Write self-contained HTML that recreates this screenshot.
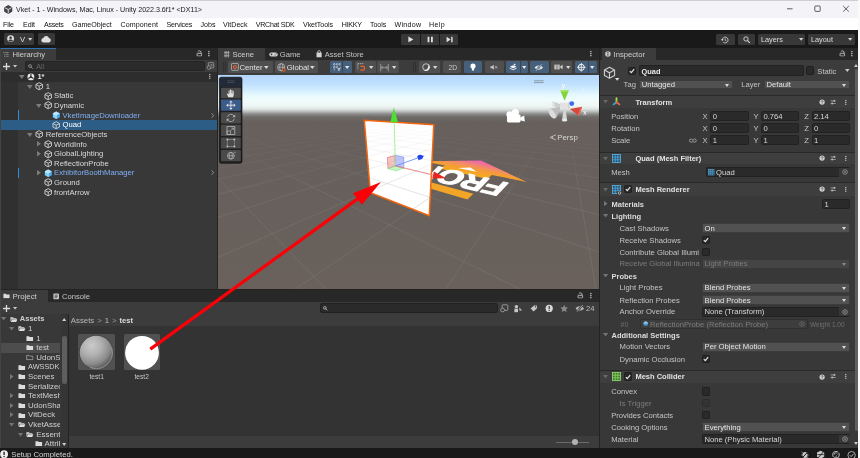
<!DOCTYPE html>
<html lang="en">
<head>
<meta charset="utf-8">
<title>Vket - 1 - Windows, Mac, Linux - Unity 2022.3.6f1* &lt;DX11&gt;</title>
<style>
*{box-sizing:border-box;margin:0;padding:0}
html,body{width:860px;height:458px;overflow:hidden;background:#232323}
body{will-change:transform}
body{font-family:"Liberation Sans",sans-serif;font-size:7.65px;color:#c4c4c4;position:relative;line-height:1}
div{position:absolute}
.t{white-space:nowrap;line-height:10px;height:10px}
b{font-weight:bold}
svg{position:absolute;overflow:visible}
.f{background:#2a2a2a;border:.6px solid #212121;border-radius:1.5px}
.dd{background:#515151;border:.6px solid #3c3c3c;border-radius:1.5px}
.dd:after{content:"";position:absolute;right:3px;top:3px;border:2.4px solid transparent;border-top:3px solid #d8d8d8;border-bottom:0}
.cb{width:8px;height:8.4px;background:#2a2a2a;border:.6px solid #1f1f1f;border-radius:1.5px}
.dd.dis:after{border-top-color:#8a8a8a}
.btn{background:#383838;border-radius:1.5px}
.tb{background:#4f4f4f;border-radius:1.5px}
.tb.on{background:#46607c}
</style>
</head>
<body>
<svg width="0" height="0" style="left:0;top:0"><defs>
<symbol id="cube" viewBox="0 0 10 10"><path d="M5 .8 8.9 2.9V7.2L5 9.3 1.1 7.2V2.9Z" fill="none" stroke="#d6d6d6" stroke-width="1.05" stroke-linejoin="round"/><path d="M1.2 3 5 5 8.8 3M5 5V9.2" fill="none" stroke="#d6d6d6" stroke-width="1.05"/></symbol>
<symbol id="pcube" viewBox="0 0 10 10"><path d="M5 .6 9 2.8V7.3L5 9.5 1 7.3V2.8Z" fill="#76cdf8"/><path d="M5 .6 9 2.8 5 5 1 2.8Z" fill="#b4e4fc"/><path d="M5 5 9 2.8V7.3L5 9.5Z" fill="#48a6ec"/><path d="M1.2 2.9 5 5 8.8 2.9M5 5V9.3" fill="none" stroke="#e8f6ff" stroke-width=".7"/></symbol>
<symbol id="ulogo" viewBox="0 0 10 10"><circle cx="5" cy="5" r="4.4" fill="#e8e8e8"/><path d="M5 5V1M5 5 1.6 7M5 5 8.4 7" stroke="#2c2c2c" stroke-width="1.5"/><circle cx="5" cy="5" r="1.1" fill="#2c2c2c"/></symbol>
<symbol id="fold" viewBox="0 0 10 8"><path d="M.6 1.2H4L4.8 2.2H9.4V7.4H.6Z" fill="#dcdcdc"/></symbol>
<symbol id="foldo" viewBox="0 0 10 8"><path d="M.6 1.2H4L4.8 2.2H8.4V3.2H2.4L.6 7.2Z" fill="#dcdcdc"/><path d="M2.8 3.8H9.8L8.2 7.4H1Z" fill="#dcdcdc"/></symbol>
<symbol id="folde" viewBox="0 0 10 8"><path d="M.9 1.5H3.9L4.7 2.5H9.1V7.1H.9Z" fill="none" stroke="#c8c8c8" stroke-width=".8"/></symbol>
<symbol id="help" viewBox="0 0 8 8"><circle cx="4" cy="4" r="3.4" fill="#d0d0d0"/><path d="M2.9 3.2C2.9 1.8 5.2 1.8 5.2 3.2 5.2 4 4 4 4 4.9" stroke="#3a3a3a" stroke-width=".9" fill="none"/><circle cx="4" cy="6" r=".55" fill="#3a3a3a"/></symbol>
<symbol id="preset" viewBox="0 0 8 8"><path d="M.8 2.4H7.2M.8 5.6H7.2" stroke="#c8c8c8" stroke-width=".8"/><rect x="4.6" y="1.2" width="1.4" height="2.4" fill="#c8c8c8"/><rect x="2" y="4.4" width="1.4" height="2.4" fill="#c8c8c8"/></symbol>
<symbol id="kebab" viewBox="0 0 2 8"><rect x=".25" y="1" width="1.5" height="1.5" fill="#c8c8c8"/><rect x=".25" y="3.25" width="1.5" height="1.5" fill="#c8c8c8"/><rect x=".25" y="5.5" width="1.5" height="1.5" fill="#c8c8c8"/></symbol>
<symbol id="lock" viewBox="0 0 8 8"><path d="M6.1 4V2.6C5.9 .7 3 .5 2.2 2" fill="none" stroke="#c8c8c8" stroke-width="1.05"/><rect x="1.3" y="4" width="5.5" height="3.3" rx=".5" fill="none" stroke="#c8c8c8" stroke-width="1.05"/></symbol>
<symbol id="pick" viewBox="0 0 8 8"><circle cx="4" cy="4" r="3.1" fill="none" stroke="#c4c4c4" stroke-width=".75"/><circle cx="4" cy="4" r=".95" fill="#c4c4c4"/></symbol>
<symbol id="meshg" viewBox="0 0 9 9"><rect x=".5" y=".5" width="8" height="8" fill="#25506c" stroke="#5cb6e8" stroke-width=".8"/><path d="M3.2 .5V8.5M5.8 .5V8.5M.5 3.2H8.5M.5 5.8H8.5" stroke="#5cb6e8" stroke-width=".7"/></symbol>
<symbol id="meshc" viewBox="0 0 9 9"><rect x=".5" y=".5" width="8" height="8" fill="#3f7a2c" stroke="#9be070" stroke-width=".8"/><path d="M3.2 .5V8.5M5.8 .5V8.5M.5 3.2H8.5M.5 5.8H8.5" stroke="#9be070" stroke-width=".7"/></symbol>
</defs></svg>
<!-- title bar -->
<div class="" style="left:0px;top:0px;width:860px;height:18px;background:#f3f3f8;"></div>
<div class="" style="left:0px;top:0px;width:860px;height:0.8px;background:#cfcfcf;"></div>
<svg style="left:4px;top:5px" width="8.5" height="9" viewBox="0 0 10 10" ><path d="M5 .4 9.2 2.7V7.3L5 9.6 .8 7.3V2.7Z" fill="#4a4a4a" stroke="#1e1e1e" stroke-width=".9"/><path d="M5 5V9.3M5 5 1.1 2.9M5 5 8.9 2.9" stroke="#f0f0f0" stroke-width="1" fill="none"/></svg>
<div class="t " style="left:16px;top:5px;font-size:7.1px;color:#1a1a1a;">Vket - 1 - Windows, Mac, Linux - Unity 2022.3.6f1* &lt;DX11&gt;</div>
<svg style="left:787.2px;top:4.9px" width="64" height="8" viewBox="0 0 64 8" ><path d="M0 3.8H5.6" stroke="#222" stroke-width=".7"/><rect x="27.8" y="1" width="5.4" height="5.4" fill="none" stroke="#222" stroke-width=".7" rx=".9"/><path d="M56.2 1 61.8 6.6M61.8 1 56.2 6.6" stroke="#222" stroke-width=".7"/></svg>
<!-- menu bar -->
<div class="" style="left:0px;top:18px;width:860px;height:12px;background:#fff;"></div>
<div class="t " style="left:3px;top:20px;font-size:7.1px;color:#111;letter-spacing:-0.15px">File</div>
<div class="t " style="left:23px;top:20px;font-size:7.1px;color:#111;letter-spacing:-0.05px">Edit</div>
<div class="t " style="left:44px;top:20px;font-size:7.1px;color:#111;letter-spacing:-0.3px">Assets</div>
<div class="t " style="left:72px;top:20px;font-size:7.1px;color:#111;">GameObject</div>
<div class="t " style="left:120.5px;top:20px;font-size:7.1px;color:#111;letter-spacing:0.09px">Component</div>
<div class="t " style="left:166.5px;top:20px;font-size:7.1px;color:#111;letter-spacing:-0.21px">Services</div>
<div class="t " style="left:200.5px;top:20px;font-size:7.1px;color:#111;">Jobs</div>
<div class="t " style="left:223px;top:20px;font-size:7.1px;color:#111;letter-spacing:0.03px">VitDeck</div>
<div class="t " style="left:255.8px;top:20px;font-size:7.1px;color:#111;letter-spacing:-0.27px">VRChat SDK</div>
<div class="t " style="left:303px;top:20px;font-size:7.1px;color:#111;letter-spacing:-0.09px">VketTools</div>
<div class="t " style="left:341.8px;top:20px;font-size:7.1px;color:#111;letter-spacing:-0.26px">HIKKY</div>
<div class="t " style="left:370px;top:20px;font-size:7.1px;color:#111;letter-spacing:-0.06px">Tools</div>
<div class="t " style="left:394.5px;top:20px;font-size:7.1px;color:#111;letter-spacing:0.27px">Window</div>
<div class="t " style="left:429px;top:20px;font-size:7.1px;color:#111;letter-spacing:0.35px">Help</div>
<!-- main toolbar -->
<div class="" style="left:0px;top:30px;width:860px;height:18px;background:#191919;"></div>
<div class="btn" style="left:4px;top:33.4px;width:30.4px;height:11.2px;"></div><div class="btn" style="left:37.5px;top:33.4px;width:17.5px;height:11.2px;"></div>
<svg style="left:7.1px;top:35.4px" width="7.2" height="7.2" viewBox="0 0 10 10" ><circle cx="5" cy="5" r="4.8" fill="#dedede"/><circle cx="5" cy="3.9" r="1.8" fill="#383838"/><path d="M1.9 8C2.4 5.6 7.6 5.6 8.1 8 6.6 9.6 3.4 9.6 1.9 8Z" fill="#383838"/></svg>
<div class="t " style="left:20px;top:35px;font-size:7.6px;color:#e0e0e0;">V</div>
<svg style="left:28px;top:38.2px" width="4.4" height="2.8" viewBox="0 0 4.4 2.8" ><path d="M0 0H4.4L2.2 2.8Z" fill="#d0d0d0"/></svg>
<svg style="left:41px;top:36px" width="10.6" height="6.8" viewBox="0 0 16 10" ><path d="M4 9.6A3.3 3.3 0 0 1 3.6 3 4.4 4.4 0 0 1 12 2.8 3.5 3.5 0 0 1 12.4 9.6Z" fill="#e0e0e0"/></svg>
<div class="btn" style="left:401px;top:33.8px;width:18.6px;height:10.8px;border-radius:1.5px 0 0 1.5px"></div><div class="btn" style="left:420.6px;top:33.8px;width:18.6px;height:10.8px;border-radius:0"></div><div class="btn" style="left:440.2px;top:33.8px;width:18px;height:10.8px;border-radius:0 1.5px 1.5px 0"></div>
<svg style="left:401px;top:33.8px" width="58" height="11" viewBox="0 0 58 11" ><path d="M7.4 2.6 12.4 5.4 7.4 8.2Z" fill="#e4e4e4"/><path d="M26.6 2.8H28.4V8.2H26.6ZM30 2.8H31.8V8.2H30Z" fill="#e4e4e4"/><path d="M45.6 2.8 49.6 5.4 45.6 8.2ZM50.2 2.8H51.6V8.2H50.2Z" fill="#e4e4e4"/></svg>
<div class="btn" style="left:716px;top:33.6px;width:18.5px;height:11.2px;"></div><div class="btn" style="left:737.6px;top:33.6px;width:17.6px;height:11.2px;"></div><div class="btn" style="left:758.4px;top:33.6px;width:46.8px;height:11.2px;"></div><div class="btn" style="left:807.6px;top:33.6px;width:47.4px;height:11.2px;"></div>
<svg style="left:721px;top:35.5px" width="8" height="8" viewBox="0 0 10 10" ><path d="M1.6 5A3.6 3.6 0 1 1 2.8 7.7" fill="none" stroke="#dcdcdc" stroke-width="1"/><path d="M0 4.2 1.7 6.3 3.3 4.2Z" fill="#dcdcdc"/><path d="M5.2 3V5.3L6.8 6.2" fill="none" stroke="#dcdcdc" stroke-width=".9"/></svg>
<svg style="left:742.8px;top:35.8px" width="7.4" height="7.4" viewBox="0 0 10 10" ><circle cx="4" cy="4" r="2.9" fill="none" stroke="#dcdcdc" stroke-width="1.2"/><path d="M6.2 6.2 9.2 9.2" stroke="#dcdcdc" stroke-width="1.4"/></svg>
<div class="t " style="left:761px;top:35px;font-size:7.3px;color:#dedede;">Layers</div><div class="t " style="left:811px;top:35px;font-size:7.3px;color:#dedede;">Layout</div>
<svg style="left:798.8px;top:38.2px" width="4.4" height="2.8" viewBox="0 0 4.4 2.8" ><path d="M0 0H4.4L2.2 2.8Z" fill="#d0d0d0"/></svg><svg style="left:847.8px;top:38.2px" width="4.4" height="2.8" viewBox="0 0 4.4 2.8" ><path d="M0 0H4.4L2.2 2.8Z" fill="#d0d0d0"/></svg>
<!-- hierarchy -->
<div class="" style="left:0px;top:47.9px;width:217px;height:12.1px;background:#282828;"></div>
<div class="" style="left:0px;top:47.9px;width:56px;height:12.1px;background:#3c3c3c;border-top:1.7px solid #2f72b6"></div>
<svg style="left:3.4px;top:52.2px" width="5.8" height="4.8" viewBox="0 0 8 7" ><path d="M0 .8H2M3 .8H8M1.4 3.5H3.4M4.4 3.5H8M1.4 6.2H3.4M4.4 6.2H8" stroke="#9c9c9c" stroke-width="1.1"/></svg>
<div class="t " style="left:12.5px;top:50px;color:#cfcfcf;">Hierarchy</div>
<svg style="left:195.5px;top:50.1px" width="6.6" height="6.6"><use href="#lock"/></svg><svg style="left:208px;top:49.7px" width="1.8" height="7.2"><use href="#kebab"/></svg>
<div class="" style="left:0px;top:60px;width:217px;height:12px;background:#3c3c3c;"></div>
<svg style="left:3px;top:62.5px" width="7" height="7" viewBox="0 0 7 7" ><path d="M3.5 0V7M0 3.5H7" stroke="#dcdcdc" stroke-width="1.3"/></svg><svg style="left:12.9px;top:65px" width="4.2" height="2.6" viewBox="0 0 4.2 2.6" ><path d="M0 0H4.2L2.1 2.6Z" fill="#c8c8c8"/></svg>
<div class="f" style="left:25px;top:61.1px;width:179.6px;height:9.6px;border-radius:2px;background:#2b2b2b;border-color:#242424"></div>
<svg style="left:28.3px;top:63.5px" width="5" height="5" viewBox="0 0 10 10" ><circle cx="4" cy="4" r="2.8" fill="none" stroke="#a8a8a8" stroke-width="1.4"/><path d="M6 6 9.4 9.4" stroke="#a8a8a8" stroke-width="1.5"/></svg>
<div class="t " style="left:36.3px;top:62px;font-size:7.2px;color:#666;">All</div>
<svg style="left:206px;top:61.9px" width="8.4" height="8.4" viewBox="0 0 10 10" ><rect x="2.8" y=".8" width="6.4" height="6.4" rx=".8" fill="none" stroke="#a8a8a8" stroke-width=".9"/><circle cx="3.4" cy="6.6" r="2.1" fill="#3c3c3c" stroke="#a8a8a8" stroke-width=".9"/><path d="M5.2 3.2H7.2V5.2" fill="none" stroke="#a8a8a8" stroke-width=".9"/></svg>
<div class="" style="left:0px;top:72px;width:217px;height:217px;background:#383838;"></div>
<div class="" style="left:0px;top:72px;width:18.3px;height:217px;background:#303030;"></div>
<div class="" style="left:0px;top:72px;width:217px;height:9.5px;background:#2d2d2d;"></div>
<svg style="left:19px;top:74.95px" width="5.6" height="3.9" viewBox="0 0 5.6 3.9" ><path d="M0 0H5.6L2.8 3.9Z" fill="#7c7c7c"/></svg>
<svg style="left:27px;top:72.8px" width="7.8" height="7.8"><use href="#ulogo"/></svg>
<div class="t " style="left:37.4px;top:72px;font-size:7.5px;color:#e4e4e4;font-weight:bold;">1*</div>
<svg style="left:208.6px;top:73.3px" width="1.7" height="6.8"><use href="#kebab"/></svg>
<svg style="left:27.4px;top:84.58px" width="5.6" height="3.9" viewBox="0 0 5.6 3.9" ><path d="M0 0H5.6L2.8 3.9Z" fill="#7c7c7c"/></svg>
<svg style="left:35.2px;top:82.13px" width="8.4" height="8.4"><use href="#cube"/></svg>
<div class="t " style="left:45.75px;top:82px;font-size:7.7px;color:#dadada;">1</div>
<svg style="left:43.6px;top:91.76px" width="8.4" height="8.4"><use href="#cube"/></svg>
<div class="t " style="left:54.1px;top:91px;font-size:7.7px;color:#dadada;">Static</div>
<svg style="left:35.8px;top:103.84px" width="5.6" height="3.9" viewBox="0 0 5.6 3.9" ><path d="M0 0H5.6L2.8 3.9Z" fill="#7c7c7c"/></svg>
<svg style="left:43.6px;top:101.39px" width="8.4" height="8.4"><use href="#cube"/></svg>
<div class="t " style="left:54.1px;top:101px;font-size:7.7px;color:#dadada;">Dynamic</div>
<svg style="left:52px;top:111.02px" width="8.4" height="8.4"><use href="#pcube"/></svg>
<div class="t " style="left:62.45px;top:111px;font-size:7.7px;color:#7fb0f5;">VketImageDownloader</div>
<div class="" style="left:18.3px;top:110.42px;width:0.9px;height:9.6px;background:#2b8fe0;"></div>
<svg style="left:210.5px;top:112.62px" width="3.4" height="5.2" viewBox="0 0 3.4 5.2" ><path d="M.5 .4 2.8 2.6 .5 4.8" fill="none" stroke="#a0a0a0" stroke-width=".8"/></svg>
<div class="" style="left:0px;top:120.05px;width:217px;height:9.63px;background:#2c5d87;"></div>
<svg style="left:52px;top:120.65px" width="8.4" height="8.4"><use href="#cube"/></svg>
<div class="t " style="left:62.45px;top:120px;font-size:7.7px;color:#fff;">Quad</div>
<svg style="left:27.4px;top:132.73px" width="5.6" height="3.9" viewBox="0 0 5.6 3.9" ><path d="M0 0H5.6L2.8 3.9Z" fill="#7c7c7c"/></svg>
<svg style="left:35.2px;top:130.28px" width="8.4" height="8.4"><use href="#cube"/></svg>
<div class="t " style="left:45.75px;top:130px;font-size:7.7px;color:#dadada;">ReferenceObjects</div>
<svg style="left:36.65px;top:141.31px" width="3.9" height="5.6" viewBox="0 0 3.9 5.6" ><path d="M0 0V5.6L3.9 2.8Z" fill="#7c7c7c"/></svg>
<svg style="left:43.6px;top:139.91px" width="8.4" height="8.4"><use href="#cube"/></svg>
<div class="t " style="left:54.1px;top:140px;font-size:7.7px;color:#dadada;">WorldInfo</div>
<svg style="left:36.65px;top:150.94px" width="3.9" height="5.6" viewBox="0 0 3.9 5.6" ><path d="M0 0V5.6L3.9 2.8Z" fill="#7c7c7c"/></svg>
<svg style="left:43.6px;top:149.54px" width="8.4" height="8.4"><use href="#cube"/></svg>
<div class="t " style="left:54.1px;top:149px;font-size:7.7px;color:#dadada;">GlobalLighting</div>
<svg style="left:43.6px;top:159.17px" width="8.4" height="8.4"><use href="#cube"/></svg>
<div class="t " style="left:54.1px;top:159px;font-size:7.7px;color:#dadada;">ReflectionProbe</div>
<svg style="left:36.65px;top:170.2px" width="3.9" height="5.6" viewBox="0 0 3.9 5.6" ><path d="M0 0V5.6L3.9 2.8Z" fill="#7c7c7c"/></svg>
<svg style="left:43.6px;top:168.8px" width="8.4" height="8.4"><use href="#pcube"/></svg>
<div class="t " style="left:54.1px;top:168px;font-size:7.7px;color:#7fb0f5;">ExhibitorBoothManager</div>
<div class="" style="left:18.3px;top:168.2px;width:0.9px;height:9.6px;background:#2b8fe0;"></div>
<svg style="left:210.5px;top:170.4px" width="3.4" height="5.2" viewBox="0 0 3.4 5.2" ><path d="M.5 .4 2.8 2.6 .5 4.8" fill="none" stroke="#a0a0a0" stroke-width=".8"/></svg>
<svg style="left:43.6px;top:178.43px" width="8.4" height="8.4"><use href="#cube"/></svg>
<div class="t " style="left:54.1px;top:178px;font-size:7.7px;color:#dadada;">Ground</div>
<svg style="left:43.6px;top:188.06px" width="8.4" height="8.4"><use href="#cube"/></svg>
<div class="t " style="left:54.1px;top:188px;font-size:7.7px;color:#dadada;">frontArrow</div>
<!-- scene panel -->
<div class="" style="left:218.4px;top:47.9px;width:380.4px;height:12.1px;background:#282828;"></div>
<div class="" style="left:218.4px;top:47.9px;width:46.2px;height:12.1px;background:#3c3c3c;"></div>
<svg style="left:223.6px;top:50.9px" width="5.6" height="6.4" viewBox="0 0 7 8" ><path d="M1.4 0V8M3.5 0V8M5.6 0V8M0 2H7M0 6H7" stroke="#b8b8b8" stroke-width=".9"/></svg>
<div class="t " style="left:232.4px;top:50px;color:#cfcfcf;">Scene</div>
<svg style="left:269px;top:51.7px" width="9" height="4.8" viewBox="0 0 18 9" ><rect x=".5" y=".5" width="17" height="8" rx="4" fill="#d4d4d4"/><path d="M3 4.5H7M5 2.5V6.5" stroke="#282828" stroke-width="1.3"/><circle cx="12" cy="5.5" r="1" fill="#282828"/><circle cx="14.4" cy="3.4" r="1" fill="#282828"/></svg>
<div class="t " style="left:279.7px;top:50px;color:#c4c4c4;">Game</div>
<svg style="left:316px;top:50.1px" width="6.2" height="7.6" viewBox="0 0 8 10" ><path d="M.6 3.4H7.4V9.6H.6Z" fill="#d4d4d4"/><path d="M2.2 4.4V2.4C2.2 .2 5.8 .2 5.8 2.4V4.4" fill="none" stroke="#d4d4d4" stroke-width="1"/></svg>
<div class="t " style="left:324.8px;top:50px;font-size:7.5px;color:#c4c4c4;">Asset Store</div>
<svg style="left:589.7px;top:49.7px" width="1.8" height="7.2"><use href="#kebab"/></svg>
<div class="" style="left:218.4px;top:60px;width:380.4px;height:15px;background:#3c3c3c;"></div>
<svg style="left:222.6px;top:62.4px" width="3" height="9.6" viewBox="0 0 3 9.6" ><path d="M.5 0V9.6M2.5 0V9.6" stroke="#2c2c2c" stroke-width=".7"/></svg><svg style="left:413.2px;top:62.4px" width="3" height="9.6" viewBox="0 0 3 9.6" ><path d="M.5 0V9.6M2.5 0V9.6" stroke="#2c2c2c" stroke-width=".7"/></svg>
<div class="tb" style="left:228.1px;top:61.4px;width:45.2px;height:11.6px;"></div><svg style="left:230.7px;top:63.3px" width="7.8" height="7.8" viewBox="0 0 10 10" ><rect x=".6" y=".6" width="8.8" height="8.8" rx="1" fill="none" stroke="#c8c8c8" stroke-width=".9"/><circle cx="5" cy="5" r="1.9" fill="none" stroke="#f0602a" stroke-width="1.3"/></svg><div class="t " style="left:239.4px;top:63px;font-size:7.75px;color:#e0e0e0;">Center</div><svg style="left:264.4px;top:65.9px" width="4.6" height="3" viewBox="0 0 4.6 3" ><path d="M0 0H4.6L2.3 3Z" fill="#d8d8d8"/></svg>
<div class="tb" style="left:275px;top:61.4px;width:43px;height:11.6px;"></div><svg style="left:277.2px;top:63px" width="9.4" height="9.4" viewBox="0 0 12 12" ><circle cx="5.4" cy="5.4" r="4.6" fill="none" stroke="#c8c8c8" stroke-width=".9"/><ellipse cx="5.4" cy="5.4" rx="2" ry="4.6" fill="none" stroke="#c8c8c8" stroke-width=".8"/><path d="M.8 5.4H10" stroke="#c8c8c8" stroke-width=".8"/><circle cx="8.6" cy="8.8" r="1.9" fill="#4f4f4f" stroke="#f0602a" stroke-width="1.2"/></svg><div class="t " style="left:286.7px;top:63px;font-size:7.75px;color:#e0e0e0;">Global</div><svg style="left:310.3px;top:65.9px" width="4.6" height="3" viewBox="0 0 4.6 3" ><path d="M0 0H4.6L2.3 3Z" fill="#d8d8d8"/></svg>
<div class="tb on" style="left:330.1px;top:61.4px;width:21.6px;height:11.6px;"></div><svg style="left:332.7px;top:63.2px" width="8" height="8" viewBox="0 0 10 10" ><path d="M0 1.6H9.6M0 5.2H5.2M1.6 0V9.6M5.2 0V5M8.6 0V3.6" fill="none" stroke="#f0f0f0" stroke-width="1" stroke-dasharray="1.1 .9"/><path d="M5.4 5.6 7.4 8 9.6 5.6M7.4 8V10" fill="none" stroke="#fff" stroke-width="1.1"/></svg><div class="" style="left:342.4px;top:61.4px;width:0.6px;height:11.6px;background:#33465c;"></div><svg style="left:344.9px;top:65.95px" width="4.4" height="2.9" viewBox="0 0 4.4 2.9" ><path d="M0 0H4.4L2.2 2.9Z" fill="#e8e8e8"/></svg>
<div class="tb" style="left:354.5px;top:61.4px;width:21px;height:11.6px;"></div><svg style="left:356.9px;top:63.2px" width="8.4" height="8" viewBox="0 0 10 10" ><path d="M.8 .8H8.4M.8 .8V8.4" fill="none" stroke="#d0d0d0" stroke-width="1" stroke-dasharray="1.4 1"/><path d="M4 4.2H7A2.3 2.3 0 0 1 7 8.8H4" fill="none" stroke="#f0602a" stroke-width="1.5"/></svg><svg style="left:368.9px;top:65.95px" width="4.4" height="2.9" viewBox="0 0 4.4 2.9" ><path d="M0 0H4.4L2.2 2.9Z" fill="#d8d8d8"/></svg>
<div class="tb" style="left:377.3px;top:61.4px;width:21.9px;height:11.6px;"></div><svg style="left:379.7px;top:63.6px" width="9" height="7.2" viewBox="0 0 10 8" ><path d="M.7 0V8M9.3 0V8" fill="none" stroke="#8e8e8e" stroke-width="1.2"/><path d="M1.6 1.6 4.6 4 1.6 6.4ZM8.4 1.6 5.4 4 8.4 6.4Z" fill="#8e8e8e"/><path d="M1.4 4H8.6" stroke="#8e8e8e" stroke-width="1"/></svg><svg style="left:392.3px;top:65.95px" width="4.4" height="2.9" viewBox="0 0 4.4 2.9" ><path d="M0 0H4.4L2.2 2.9Z" fill="#d8d8d8"/></svg>
<div class="tb" style="left:418.8px;top:61.4px;width:21.7px;height:11.6px;"></div><svg style="left:421.6px;top:63.1px" width="8.2" height="8.2" viewBox="0 0 10 10" ><circle cx="5" cy="5" r="4.1" fill="none" stroke="#d8d8d8" stroke-width="1"/><path d="M7.6 1.6A4.3 4.3 0 0 1 2 8.4 5 5 0 0 0 7.6 1.6Z" fill="#f0f0f0"/></svg><svg style="left:433px;top:65.95px" width="4.4" height="2.9" viewBox="0 0 4.4 2.9" ><path d="M0 0H4.4L2.2 2.9Z" fill="#d8d8d8"/></svg>
<div class="tb" style="left:442.5px;top:61.4px;width:18.8px;height:11.6px;"></div><div class="t " style="left:448.6px;top:63px;font-size:6.7px;color:#c8c8c8;">2D</div>
<div class="tb on" style="left:463.8px;top:61.4px;width:18.7px;height:11.6px;"></div><svg style="left:470.2px;top:62.8px" width="6" height="8.8" viewBox="0 0 7 10" ><circle cx="3.5" cy="3.4" r="3" fill="#fff"/><path d="M2.2 5.6H4.8V8.6H2.2Z" fill="#fff"/></svg>
<div class="tb" style="left:485px;top:61.4px;width:18.8px;height:11.6px;"></div><svg style="left:490.4px;top:64px" width="8" height="6.6" viewBox="0 0 10 8" ><path d="M.6 2.8H2.4L4.8 .8V7.2L2.4 5.2H.6Z" fill="#c4c4c4"/><path d="M6.2 2.4 9 5.6M9 2.4 6.2 5.6" stroke="#c4c4c4" stroke-width=".9"/></svg>
<div class="tb on" style="left:505.8px;top:61.4px;width:22.2px;height:11.6px;"></div><svg style="left:508.6px;top:63.4px" width="8.4" height="7.6" viewBox="0 0 10 9" ><path d="M1 4.4 5 2.6 9 4.4 5 6.2Z" fill="#fff"/><path d="M1 6.2 5 8 9 6.2" fill="none" stroke="#fff" stroke-width="1"/><path d="M6.8 .4 7.3 1.5 8.4 2 7.3 2.5 6.8 3.6 6.3 2.5 5.2 2 6.3 1.5Z" fill="#fff"/></svg><div class="" style="left:519.5px;top:61.4px;width:0.6px;height:11.6px;background:#33465c;"></div><svg style="left:521.6px;top:65.95px" width="4.4" height="2.9" viewBox="0 0 4.4 2.9" ><path d="M0 0H4.4L2.2 2.9Z" fill="#e8e8e8"/></svg>
<div class="tb on" style="left:529.5px;top:61.4px;width:19.3px;height:11.6px;"></div><svg style="left:534.3px;top:63.6px" width="9.6" height="7.2" viewBox="0 0 12 9" ><path d="M.8 4.5C3 .9 9 .9 11.2 4.5 9 8.1 3 8.1 .8 4.5Z" fill="#e8e8e8"/><circle cx="6" cy="4.5" r="1.6" fill="#46607c"/><path d="M2.2 8.6 9.8 .4" stroke="#46607c" stroke-width="2"/><path d="M2.6 8.4 9.6 .6" stroke="#e8e8e8" stroke-width=".9"/></svg>
<div class="tb" style="left:550.8px;top:61.4px;width:21.7px;height:11.6px;"></div><svg style="left:553.8px;top:64.2px" width="9" height="6" viewBox="0 0 12 8" ><path d="M.5 .8H7.5V7.2H.5Z" fill="#d0d0d0"/><path d="M8.4 3 11.5 1V7L8.4 5Z" fill="#d0d0d0"/><path d="M3 .8V7.2M5 .8V7.2" stroke="#4f4f4f" stroke-width=".7"/></svg><svg style="left:565.6px;top:65.95px" width="4.4" height="2.9" viewBox="0 0 4.4 2.9" ><path d="M0 0H4.4L2.2 2.9Z" fill="#d8d8d8"/></svg>
<div class="tb on" style="left:574.5px;top:61.4px;width:22.3px;height:11.6px;"></div><svg style="left:577.1px;top:63px" width="8.6" height="8.6" viewBox="0 0 10 10" ><circle cx="5" cy="5" r="3.5" fill="none" stroke="#fff" stroke-width="1.1"/><path d="M0 5H10M5 0V10" stroke="#fff" stroke-width=".9"/></svg><div class="" style="left:588px;top:61.4px;width:0.6px;height:11.6px;background:#33465c;"></div><svg style="left:590.3px;top:65.95px" width="4.4" height="2.9" viewBox="0 0 4.4 2.9" ><path d="M0 0H4.4L2.2 2.9Z" fill="#e8e8e8"/></svg>
<div id="view" style="left:218.4px;top:75px;width:380.4px;height:214px;overflow:hidden;background:#66615e">
<svg style="left:0;top:0" width="380.4" height="214" viewBox="218.4 75 380.4 214">
<defs>
<linearGradient id="sky" x1="0" y1="75" x2="0" y2="289" gradientUnits="userSpaceOnUse">
<stop offset="0.0000" stop-color="#b3d6fc"/><stop offset="0.0421" stop-color="#c0e0fd"/><stop offset="0.0701" stop-color="#d2edfe"/><stop offset="0.0935" stop-color="#e6f9fe"/><stop offset="0.1168" stop-color="#f0fcfc"/><stop offset="0.1449" stop-color="#eef6f4"/><stop offset="0.1589" stop-color="#dfe6e4"/><stop offset="0.1706" stop-color="#b9bebd"/><stop offset="0.1822" stop-color="#8c8c8c"/><stop offset="0.1963" stop-color="#6e6a67"/><stop offset="0.2243" stop-color="#665f5b"/><stop offset="1.0000" stop-color="#6a615c"/>
</linearGradient>
<linearGradient id="gridf" x1="0" y1="120" x2="0" y2="195" gradientUnits="userSpaceOnUse">
<stop offset="0" stop-color="#a09c99" stop-opacity="0"/><stop offset="1" stop-color="#a09c99" stop-opacity=".28"/>
</linearGradient>
<linearGradient id="arr" x1="0" y1="0" x2="1" y2="0">
<stop offset="0" stop-color="#f5a82a"/><stop offset=".55" stop-color="#f59a3c"/><stop offset="1" stop-color="#ee66b0"/>
</linearGradient>
<linearGradient id="gridq" x1="0" y1="125" x2="0" y2="200" gradientUnits="userSpaceOnUse">
<stop offset="0" stop-color="#a8a8a8" stop-opacity="0"/><stop offset="1" stop-color="#a8a8a8" stop-opacity=".6"/>
</linearGradient>
</defs>
<rect x="218" y="75" width="382" height="214" fill="url(#sky)"/>
<path d="M-25728.6 1257.2 L375.8 114.5M-24782.4 1257.2 L379.6 114.6M-23836.3 1257.2 L383.5 114.8M-22890.1 1257.2 L387.5 114.9M-21944.0 1257.2 L391.7 115.1M-20997.8 1257.2 L396.0 115.2M-18621.4 946.1 L-25574.3 1257.2M-20051.6 1257.2 L400.5 115.4M-5550.0 373.9 L-24354.1 1257.2M-19105.5 1257.2 L405.2 115.6M-3072.1 265.4 L-23133.8 1257.2M-18159.3 1257.2 L410.0 115.7M-2023.3 219.5 L-21913.6 1257.2M-17213.2 1257.2 L415.0 115.9M-1444.0 194.2 L-20693.3 1257.2M-16267.0 1257.2 L420.2 116.1M-1076.6 178.1 L-19473.1 1257.2M-15320.8 1257.2 L425.6 116.3M-822.8 167.0 L-18252.9 1257.2M-14374.7 1257.2 L431.3 116.5M-637.0 158.8 L-17032.6 1257.2M-13428.5 1257.2 L437.1 116.7M-495.1 152.6 L-15812.4 1257.2M-12482.4 1257.2 L443.3 116.9M-383.1 147.7 L-14592.1 1257.2M-11536.2 1257.2 L449.6 117.2M-292.5 143.8 L-13371.9 1257.2M-10590.1 1257.2 L456.3 117.4M-217.8 140.5 L-12151.7 1257.2M-9643.9 1257.2 L463.3 117.7M-155.0 137.7 L-10931.4 1257.2M-8697.7 1257.2 L470.5 117.9M-101.5 135.4 L-9711.2 1257.2M-7751.6 1257.2 L478.2 118.2M-55.5 133.4 L-8490.9 1257.2M-6805.4 1257.2 L486.2 118.5M-15.4 131.6 L-7270.7 1257.2M-5859.3 1257.2 L494.6 118.8M19.9 130.1 L-6050.5 1257.2M-4913.1 1257.2 L503.4 119.1M51.1 128.7 L-4830.2 1257.2M-3966.9 1257.2 L512.7 119.5M78.9 127.5 L-3610.0 1257.2M-3020.8 1257.2 L522.5 119.8M103.9 126.4 L-2389.8 1257.2M-2074.6 1257.2 L532.8 120.2M126.4 125.4 L-1169.5 1257.2M-1128.5 1257.2 L543.7 120.6M146.8 124.5 L50.7 1257.2M-182.3 1257.2 L555.3 121.0M165.4 123.7 L1271.0 1257.2M763.9 1257.2 L567.5 121.5M182.4 123.0 L2491.2 1257.2M1710.0 1257.2 L580.5 121.9M198.1 122.3 L3711.4 1257.2M2656.2 1257.2 L594.4 122.4M212.5 121.6 L4931.7 1257.2M3602.3 1257.2 L609.2 123.0M225.8 121.1 L6151.9 1257.2M4548.5 1257.2 L624.9 123.6M238.1 120.5 L7372.2 1257.2M5494.7 1257.2 L641.8 124.2M249.6 120.0 L8592.4 1257.2M6440.8 1257.2 L659.9 124.8M260.3 119.6 L9812.6 1257.2M7387.0 1257.2 L679.5 125.5M270.3 119.1 L11032.9 1257.2M8333.1 1257.2 L700.5 126.3M279.7 118.7 L12253.1 1257.2M9279.3 1257.2 L723.3 127.1M288.5 118.3 L13473.4 1257.2M10225.5 1257.2 L748.1 128.0M296.7 118.0 L14693.6 1257.2M11171.6 1257.2 L775.1 129.0M304.5 117.6 L15913.8 1257.2M12117.8 1257.2 L804.6 130.1M311.8 117.3 L17134.1 1257.2M13063.9 1257.2 L837.1 131.3M318.8 117.0 L18354.3 1257.2M14010.1 1257.2 L872.9 132.6M325.3 116.7 L19574.6 1257.2M14956.2 1257.2 L912.7 134.0M331.6 116.4 L20794.8 1257.2M15902.4 1257.2 L957.1 135.6M337.5 116.2 L22015.0 1257.2M16848.6 1257.2 L1006.9 137.5M343.1 115.9 L23235.3 1257.2M17794.7 1257.2 L1063.3 139.5M348.5 115.7 L7378.4 448.6M18740.9 1257.2 L1127.7 141.9M353.6 115.5 L4205.8 289.2M19687.0 1257.2 L1201.8 144.6M358.4 115.3 L3049.1 231.0M20633.2 1257.2 L1288.0 147.7M363.1 115.1 L2450.2 200.9M21579.4 1257.2 L1389.6 151.4M367.5 114.9 L2083.9 182.5M22525.5 1257.2 L1511.1 155.8M371.7 114.7 L1836.8 170.1M23471.7 1257.2 L1658.9 161.2M375.8 114.5 L1658.9 161.2" stroke="url(#gridf)" stroke-width=".6" fill="none"/>
<linearGradient id="arr2" gradientUnits="userSpaceOnUse" x1="474.8" y1="174.5" x2="477.7" y2="159.9"><stop offset="0" stop-color="#f5a824"/><stop offset=".25" stop-color="#f5a02e"/><stop offset=".52" stop-color="#f4905a"/><stop offset=".82" stop-color="#f0709c"/><stop offset="1" stop-color="#ee60b4"/></linearGradient>
<polygon points="481.4,160.6 527.3,181.9 492.2,174.9 487.9,179.0 439.4,168.6 445.5,165.6 423.5,161.2" fill="url(#arr2)"/>
<polygon points="470.9,167.5 477.0,171.8 458.2,168.0" fill="#fff"/>
<polygon points="410.0,182.6 467.8,199.5 473.8,193.7 418.0,178.7" fill="#f3a528"/>
<text transform="matrix(-3.1034 -0.7279 1.7298 -1.8191 510.41 183.48)" font-family="Liberation Sans,sans-serif" font-weight="bold" font-size="10" fill="#fff" stroke="#fff" stroke-width=".45" stroke-linejoin="round">FRONT</text>
<polygon points="364.7,120.3 434.2,124.8 429.7,215.7 370.8,192.8" fill="#ffffff"/>
<clipPath id="qc"><polygon points="364.7,120.3 434.2,124.8 429.7,215.7 370.8,192.8" /></clipPath>
<path d="M-25728.6 1257.2 L375.8 114.5M-24782.4 1257.2 L379.6 114.6M-23836.3 1257.2 L383.5 114.8M-22890.1 1257.2 L387.5 114.9M-21944.0 1257.2 L391.7 115.1M-20997.8 1257.2 L396.0 115.2M-18621.4 946.1 L-25574.3 1257.2M-20051.6 1257.2 L400.5 115.4M-5550.0 373.9 L-24354.1 1257.2M-19105.5 1257.2 L405.2 115.6M-3072.1 265.4 L-23133.8 1257.2M-18159.3 1257.2 L410.0 115.7M-2023.3 219.5 L-21913.6 1257.2M-17213.2 1257.2 L415.0 115.9M-1444.0 194.2 L-20693.3 1257.2M-16267.0 1257.2 L420.2 116.1M-1076.6 178.1 L-19473.1 1257.2M-15320.8 1257.2 L425.6 116.3M-822.8 167.0 L-18252.9 1257.2M-14374.7 1257.2 L431.3 116.5M-637.0 158.8 L-17032.6 1257.2M-13428.5 1257.2 L437.1 116.7M-495.1 152.6 L-15812.4 1257.2M-12482.4 1257.2 L443.3 116.9M-383.1 147.7 L-14592.1 1257.2M-11536.2 1257.2 L449.6 117.2M-292.5 143.8 L-13371.9 1257.2M-10590.1 1257.2 L456.3 117.4M-217.8 140.5 L-12151.7 1257.2M-9643.9 1257.2 L463.3 117.7M-155.0 137.7 L-10931.4 1257.2M-8697.7 1257.2 L470.5 117.9M-101.5 135.4 L-9711.2 1257.2M-7751.6 1257.2 L478.2 118.2M-55.5 133.4 L-8490.9 1257.2M-6805.4 1257.2 L486.2 118.5M-15.4 131.6 L-7270.7 1257.2M-5859.3 1257.2 L494.6 118.8M19.9 130.1 L-6050.5 1257.2M-4913.1 1257.2 L503.4 119.1M51.1 128.7 L-4830.2 1257.2M-3966.9 1257.2 L512.7 119.5M78.9 127.5 L-3610.0 1257.2M-3020.8 1257.2 L522.5 119.8M103.9 126.4 L-2389.8 1257.2M-2074.6 1257.2 L532.8 120.2M126.4 125.4 L-1169.5 1257.2M-1128.5 1257.2 L543.7 120.6M146.8 124.5 L50.7 1257.2M-182.3 1257.2 L555.3 121.0M165.4 123.7 L1271.0 1257.2M763.9 1257.2 L567.5 121.5M182.4 123.0 L2491.2 1257.2M1710.0 1257.2 L580.5 121.9M198.1 122.3 L3711.4 1257.2M2656.2 1257.2 L594.4 122.4M212.5 121.6 L4931.7 1257.2M3602.3 1257.2 L609.2 123.0M225.8 121.1 L6151.9 1257.2M4548.5 1257.2 L624.9 123.6M238.1 120.5 L7372.2 1257.2M5494.7 1257.2 L641.8 124.2M249.6 120.0 L8592.4 1257.2M6440.8 1257.2 L659.9 124.8M260.3 119.6 L9812.6 1257.2M7387.0 1257.2 L679.5 125.5M270.3 119.1 L11032.9 1257.2M8333.1 1257.2 L700.5 126.3M279.7 118.7 L12253.1 1257.2M9279.3 1257.2 L723.3 127.1M288.5 118.3 L13473.4 1257.2M10225.5 1257.2 L748.1 128.0M296.7 118.0 L14693.6 1257.2M11171.6 1257.2 L775.1 129.0M304.5 117.6 L15913.8 1257.2M12117.8 1257.2 L804.6 130.1M311.8 117.3 L17134.1 1257.2M13063.9 1257.2 L837.1 131.3M318.8 117.0 L18354.3 1257.2M14010.1 1257.2 L872.9 132.6M325.3 116.7 L19574.6 1257.2M14956.2 1257.2 L912.7 134.0M331.6 116.4 L20794.8 1257.2M15902.4 1257.2 L957.1 135.6M337.5 116.2 L22015.0 1257.2M16848.6 1257.2 L1006.9 137.5M343.1 115.9 L23235.3 1257.2M17794.7 1257.2 L1063.3 139.5M348.5 115.7 L7378.4 448.6M18740.9 1257.2 L1127.7 141.9M353.6 115.5 L4205.8 289.2M19687.0 1257.2 L1201.8 144.6M358.4 115.3 L3049.1 231.0M20633.2 1257.2 L1288.0 147.7M363.1 115.1 L2450.2 200.9M21579.4 1257.2 L1389.6 151.4M367.5 114.9 L2083.9 182.5M22525.5 1257.2 L1511.1 155.8M371.7 114.7 L1836.8 170.1M23471.7 1257.2 L1658.9 161.2M375.8 114.5 L1658.9 161.2" stroke="url(#gridq)" stroke-width=".6" fill="none" clip-path="url(#qc)"/>
<polygon points="364.7,120.3 434.2,124.8 429.7,215.7 370.8,192.8" fill="none" stroke="#f2660f" stroke-width="1.5" stroke-linejoin="miter"/>
<polygon points="395.8,165.9 395.5,155.3 387.8,157.5 388.3,168.6" fill="#e05050" fill-opacity=".35" stroke="#e26a6a" stroke-width=".6"/>
<polygon points="395.8,165.9 404.2,168.0 396.8,170.8 388.3,168.6" fill="#60e060" fill-opacity=".35" stroke="#7be07b" stroke-width=".6"/>
<polygon points="395.8,165.9 404.2,168.0 404.1,157.0 395.5,155.3" fill="#5a6cf0" fill-opacity=".4" stroke="#7a86f0" stroke-width=".6"/>
<path d="M395.8 165.9 L433.4 175.0" stroke="#f08080" stroke-width=".9"/>
<polygon points="432.6,178.5 434.3,171.5 446.5,178.2" fill="#e8261e"/>
<path d="M395.8 165.9 L394.6 122.2" stroke="#9cf28c" stroke-width=".9"/>
<polygon points="390.8,122.2 398.4,122.2 394.2,107.5" fill="#4ee030"/>
<path d="M395.8 165.9 L417.9 158.1" stroke="#6f8cf5" stroke-width=".9"/>
<ellipse cx="420.6" cy="157.1" rx="2.7" ry="2.4" fill="#1f46f0"/>
<polygon points="417.9,155.9 418.9,160.5 424.9,155.8" fill="#1f46f0"/>
<!-- tool overlay -->
<rect x="219.8" y="77.2" width="22.6" height="86" rx="1.8" fill="#202020" stroke="#141414" stroke-width=".7"/>
<rect x="220.4" y="77.8" width="21.4" height="9.2" rx="1.2" fill="#212a36"/>
<path d="M227.6 80.8H235M227.6 82.6H235" stroke="#4e5866" stroke-width=".7"/>
<rect x="221.4" y="87.8" width="19.8" height="10.4" rx=".8" fill="#4d4d4d"/>
<rect x="221.4" y="99.4" width="19.8" height="11.4" rx=".8" fill="#3b5c8a"/>
<rect x="221.4" y="112.2" width="19.8" height="11.2" rx=".8" fill="#4a4a4a"/>
<rect x="221.4" y="124.8" width="19.8" height="11.2" rx=".8" fill="#4a4a4a"/>
<rect x="221.4" y="137.4" width="19.8" height="11.2" rx=".8" fill="#4a4a4a"/>
<rect x="221.4" y="150" width="19.8" height="11.2" rx=".8" fill="#4a4a4a"/>
<!-- hand -->
<path d="M228.8 97.2 227.2 94 228.2 93.6 229 94.6V90.4H230V93.2H230.4V89.6H231.4V93.2H231.8V90H232.8V93.4H233.2V91H234.1V95.4L233.4 97.2Z" fill="#dedede"/>
<!-- move -->
<path d="M231.3 103V107.4M229 105.2H233.6" stroke="#e8e8e8" stroke-width=".9"/>
<path d="M231.3 100.4 233 102.6H229.6ZM231.3 110 233 107.8H229.6ZM226.5 105.2 228.7 103.5V106.9ZM236.1 105.2 233.9 103.5V106.9Z" fill="#e8e8e8"/>
<!-- rotate -->
<path d="M227.8 117A3.7 3.7 0 0 1 234.6 116.2M234.8 118.8A3.7 3.7 0 0 1 228 119.8" fill="none" stroke="#b4b4b4" stroke-width=".8"/>
<path d="M235.6 114.4V117.2H232.8ZM227 121.6V118.8H229.8Z" fill="#b4b4b4"/>
<!-- scale -->
<rect x="227.4" y="126.6" width="7.8" height="7.8" fill="none" stroke="#b4b4b4" stroke-width=".8"/>
<rect x="227.4" y="131" width="3.4" height="3.4" fill="none" stroke="#b4b4b4" stroke-width=".7"/>
<path d="M231 130.8 233.8 128M231.8 128H233.8V130" fill="none" stroke="#b4b4b4" stroke-width=".7"/>
<!-- rect -->
<rect x="227.8" y="139.5" width="7" height="7" fill="none" stroke="#b4b4b4" stroke-width=".8" stroke-dasharray="1.2 .8"/>
<path d="M227 138.7H228.6V140.3H227ZM234 138.7H235.6V140.3H234ZM227 145.7H228.6V147.3H227ZM234 145.7H235.6V147.3H234Z" fill="#d0d0d0"/>
<!-- transform -->
<circle cx="231.3" cy="155.7" r="3.4" fill="none" stroke="#b4b4b4" stroke-width=".8"/>
<ellipse cx="231.3" cy="155.7" rx="1.5" ry="3.4" fill="none" stroke="#b4b4b4" stroke-width=".7"/>
<path d="M227.9 155.7H234.7" stroke="#b4b4b4" stroke-width=".7"/>
<path d="M235.2 151.4 236.2 152.6 234.8 153Z" fill="#b4b4b4"/>
<!-- overlay drag handle right -->
<path d="M534.4 80.8H544M534.4 82.6H544" stroke="#7e8a96" stroke-width=".8"/>
<!-- camera icon -->
<g fill="#fff"><circle cx="510.2" cy="114.6" r="3.4"/><circle cx="515.8" cy="112.6" r="3.6"/><rect x="507.4" y="114.6" width="13.6" height="7.8" rx="1.4"/><path d="M520.6 117.4 524.6 115.6 525.2 121.6 520.6 120.2Z"/></g>
<!-- orientation gizmo -->
<g>
<path d="M553.2 101.2 561.4 104.4 560.4 107.4 553.6 106.6Z" fill="#cdcdcd"/>
<ellipse cx="553.5" cy="103.9" rx="1.5" ry="2.8" fill="#e6e6e6" transform="rotate(-8 553.5 103.9)"/>
<path d="M549.2 109 561.6 106.6 556.4 118.6Z" fill="#bdbdbd"/>
<ellipse cx="552.6" cy="113.8" rx="2.6" ry="5.4" fill="#dcdcdc" transform="rotate(-32 552.6 113.8)"/>
<path d="M564.2 108.4 562.4 120.2 567.6 120.2 565.8 108.4Z" fill="#d6d6d6"/>
<ellipse cx="565" cy="120.2" rx="2.6" ry="1.3" fill="#eeeeee"/>
<rect x="560.4" y="102.8" width="8.4" height="6.2" fill="#e2e2e2"/>
<path d="M560.4 102.8 562 101.6H570L568.8 102.8Z" fill="#f2f2f2"/>
<path d="M568.8 102.8 570 101.6V107.8L568.8 109Z" fill="#c8c8c8"/>
<path d="M560.8 90.8H569.2L565 100.8Z" fill="#86d23c"/>
<ellipse cx="565" cy="90.8" rx="4.2" ry="1" fill="#a4e660"/>
<circle cx="572.2" cy="103.6" r="2.4" fill="#3a6cf0"/>
<path d="M570.2 109 582.4 106.8 579.6 116Z" fill="#d8473a"/>
<path d="M582.4 106.8 579.6 116 578.2 114.4 580.8 107.2Z" fill="#e86a5a"/>
</g>
<text x="562.2" y="88" font-family="Liberation Sans,sans-serif" font-size="6.6" fill="#fff">y</text>
<text x="583.6" y="114.8" font-family="Liberation Sans,sans-serif" font-size="6.6" fill="#fff">x</text>
<text x="582.4" y="91.4" font-family="Liberation Sans,sans-serif" font-size="5.6" fill="#fff" fill-opacity=".35">z</text>
<path d="M556.4 134.8 550.4 137.4 556.4 140M553 136.2 553 138.6" fill="none" stroke="#c8c8c8" stroke-width=".8"/>
<text x="557.6" y="140.2" font-family="Liberation Sans,sans-serif" font-size="7.9" fill="#d6d6d6">Persp</text>

</svg>
</div>
<!-- inspector -->
<div class="" style="left:600px;top:47.9px;width:258px;height:12.1px;background:#282828;"></div>
<div class="" style="left:601.5px;top:47.9px;width:54.5px;height:12.1px;background:#3c3c3c;"></div>
<svg style="left:605px;top:51.1px" width="5.8" height="5.8" viewBox="0 0 8 8" ><circle cx="4" cy="4" r="3.8" fill="#c8c8c8"/><path d="M4 3.4V6.4" stroke="#3c3c3c" stroke-width="1.3"/><circle cx="4" cy="2" r=".8" fill="#3c3c3c"/></svg>
<div class="t " style="left:613.6px;top:50px;color:#cfcfcf;">Inspector</div>
<svg style="left:839px;top:50.1px" width="6.6" height="6.6"><use href="#lock"/></svg><svg style="left:851.3px;top:49.7px" width="1.8" height="7.2"><use href="#kebab"/></svg>
<div class="" style="left:600px;top:60px;width:258px;height:388px;background:#383838;"></div>
<div class="" style="left:600px;top:60px;width:258px;height:35px;background:#3c3c3c;"></div>
<svg style="left:603px;top:65.6px" width="13" height="13.4" viewBox="0 0 10 10" ><path d="M5 .8 8.9 2.9V7.2L5 9.3 1.1 7.2V2.9Z" fill="none" stroke="#cdcdcd" stroke-width=".85" stroke-linejoin="round"/><path d="M1.2 3 5 5.1 8.8 3M5 5.1V9.2" fill="none" stroke="#cdcdcd" stroke-width=".85"/></svg>
<svg style="left:615.2px;top:78.4px" width="4.4" height="2.8" viewBox="0 0 4.4 2.8" ><path d="M0 0H4.4L2.2 2.8Z" fill="#e0e0e0"/></svg>
<div class="cb" style="left:628px;top:66.6px;"></div><svg style="left:628px;top:66.8px" width="8" height="8" viewBox="0 0 8 8" ><path d="M1.8 4.1 3.3 5.7 6.2 2.2" stroke="#e6e6e6" stroke-width="1.15" fill="none"/></svg>
<div class="f" style="left:639.3px;top:65.2px;width:165px;height:10.8px;"></div><div class="t " style="left:641.6px;top:67px;font-size:7.4px;color:#e8e8e8;font-weight:bold;">Quad</div>
<div class="cb" style="left:806.3px;top:66.4px;"></div>
<div class="t " style="left:817.3px;top:67px;color:#c4c4c4;">Static</div>
<svg style="left:844.7px;top:69.3px" width="4.6" height="3" viewBox="0 0 4.6 3" ><path d="M0 0H4.6L2.3 3Z" fill="#c8c8c8"/></svg>
<div class="t " style="left:623.6px;top:80px;">Tag</div>
<div class="dd" style="left:639.3px;top:79.7px;width:93.4px;height:9.7px;"></div><div class="t " style="left:641.8px;top:80px;color:#e4e4e4;">Untagged</div>
<div class="t " style="left:741.2px;top:80px;">Layer</div>
<div class="dd" style="left:764.1px;top:79.7px;width:86.1px;height:9.7px;"></div><div class="t " style="left:766.6px;top:80px;color:#e4e4e4;">Default</div>
<div class="" style="left:600px;top:94.8px;width:258px;height:1px;background:#292929;"></div><div class="" style="left:600px;top:95.8px;width:258px;height:12.2px;background:#3e3e3e;"></div><svg style="left:603.1px;top:100.4px" width="5" height="3.4" viewBox="0 0 5 3.4" ><path d="M0 0H5L2.5 3.4Z" fill="#686868"/></svg><svg style="left:611.6px;top:97.3px" width="9" height="9" viewBox="0 0 10 10" ><path d="M5 5.4V1.4" stroke="#9fe04a" stroke-width="2" stroke-linecap="round"/><path d="M5 5.8 1.8 8.2" stroke="#3aa6e8" stroke-width="2" stroke-linecap="round"/><path d="M5 5.8 8.2 8.2" stroke="#f0683a" stroke-width="2" stroke-linecap="round"/></svg><div class="t " style="left:635.4px;top:98px;font-size:7.5px;color:#e2e2e2;font-weight:bold;">Transform</div><svg style="left:818.6px;top:98.8px" width="6.2" height="6.2"><use href="#help"/></svg><svg style="left:830.2px;top:98.7px" width="6.4" height="6.4"><use href="#preset"/></svg><svg style="left:844.7px;top:98.5px" width="1.7" height="6.8"><use href="#kebab"/></svg>
<div class="t " style="left:611.2px;top:112px;">Position</div><div class="t " style="left:702.4px;top:112px;">X</div><div class="f" style="left:710.3px;top:111.3px;width:38.7px;height:10px;"></div><div class="t " style="left:712.7px;top:112px;color:#d6d6d6;">0</div><div class="t " style="left:753.4px;top:112px;">Y</div><div class="f" style="left:761.1px;top:111.3px;width:38.4px;height:10px;"></div><div class="t " style="left:763.5px;top:112px;color:#d6d6d6;">0.764</div><div class="t " style="left:804.2px;top:112px;">Z</div><div class="f" style="left:811.6px;top:111.3px;width:38.7px;height:10px;"></div><div class="t " style="left:814px;top:112px;color:#d6d6d6;">2.14</div>
<div class="t " style="left:611.2px;top:124px;">Rotation</div><div class="t " style="left:702.4px;top:124px;">X</div><div class="f" style="left:710.3px;top:123.3px;width:38.7px;height:10px;"></div><div class="t " style="left:712.7px;top:124px;color:#d6d6d6;">0</div><div class="t " style="left:753.4px;top:124px;">Y</div><div class="f" style="left:761.1px;top:123.3px;width:38.4px;height:10px;"></div><div class="t " style="left:763.5px;top:124px;color:#d6d6d6;">0</div><div class="t " style="left:804.2px;top:124px;">Z</div><div class="f" style="left:811.6px;top:123.3px;width:38.7px;height:10px;"></div><div class="t " style="left:814px;top:124px;color:#d6d6d6;">0</div>
<div class="t " style="left:611.2px;top:136px;">Scale</div><div class="t " style="left:702.4px;top:136px;">X</div><div class="f" style="left:710.3px;top:135.3px;width:38.7px;height:10px;"></div><div class="t " style="left:712.7px;top:136px;color:#d6d6d6;">1</div><div class="t " style="left:753.4px;top:136px;">Y</div><div class="f" style="left:761.1px;top:135.3px;width:38.4px;height:10px;"></div><div class="t " style="left:763.5px;top:136px;color:#d6d6d6;">1</div><div class="t " style="left:804.2px;top:136px;">Z</div><div class="f" style="left:811.6px;top:135.3px;width:38.7px;height:10px;"></div><div class="t " style="left:814px;top:136px;color:#d6d6d6;">1</div><svg style="left:689px;top:137.7px" width="7.8" height="5.4" viewBox="0 0 10 7" ><rect x=".6" y="1.4" width="4.4" height="4" rx="2" fill="none" stroke="#b4b4b4" stroke-width="1"/><rect x="5" y="1.4" width="4.4" height="4" rx="2" fill="none" stroke="#b4b4b4" stroke-width="1"/><path d="M2.4 6.8 7.6 .2" stroke="#383838" stroke-width="1.6"/><path d="M2.8 6.6 7.4 .4" stroke="#b4b4b4" stroke-width=".8"/></svg>
<div class="" style="left:600px;top:151.7px;width:258px;height:1px;background:#292929;"></div><div class="" style="left:600px;top:152.7px;width:258px;height:11.6px;background:#3e3e3e;"></div><svg style="left:603.1px;top:157px" width="5" height="3.4" viewBox="0 0 5 3.4" ><path d="M0 0H5L2.5 3.4Z" fill="#686868"/></svg><svg style="left:611.6px;top:154px" width="9" height="9"><use href="#meshg"/></svg><div class="t " style="left:635.4px;top:154px;font-size:7.5px;color:#e2e2e2;font-weight:bold;">Quad (Mesh Filter)</div><svg style="left:818.6px;top:155.4px" width="6.2" height="6.2"><use href="#help"/></svg><svg style="left:830.2px;top:155.3px" width="6.4" height="6.4"><use href="#preset"/></svg><svg style="left:844.7px;top:155.1px" width="1.7" height="6.8"><use href="#kebab"/></svg>
<div class="t " style="left:611.2px;top:168px;">Mesh</div>
<div class="f" style="left:705.8px;top:167.2px;width:144.5px;height:10px;"></div><div class="" style="left:839.3px;top:167.8px;width:10.4px;height:8.8px;background:#373737;border-radius:0 1.5px 1.5px 0"></div><svg style="left:708px;top:168.9px" width="6.6" height="6.6"><use href="#meshg"/></svg><div class="t " style="left:716px;top:168px;color:#d6d6d6;">Quad</div><svg style="left:841.5px;top:169.2px" width="6" height="6"><use href="#pick"/></svg>
<div class="" style="left:600px;top:181.7px;width:258px;height:1px;background:#292929;"></div><div class="" style="left:600px;top:182.7px;width:258px;height:13.3px;background:#3e3e3e;"></div><svg style="left:603.1px;top:187.85px" width="5" height="3.4" viewBox="0 0 5 3.4" ><path d="M0 0H5L2.5 3.4Z" fill="#686868"/></svg><svg style="left:611.6px;top:184.85px" width="9" height="9"><use href="#meshg"/></svg><svg style="left:616.6px;top:190.55px" width="5" height="4" viewBox="0 0 5 4" ><rect x="0" y="0" width="5" height="4" rx="1" fill="#3e3e3e"/><circle cx="2.5" cy="2" r="1.3" fill="none" stroke="#d8d8d8" stroke-width=".7"/></svg><div class="cb" style="left:624.2px;top:185.05px;"></div><svg style="left:624.2px;top:185.25px" width="8" height="8" viewBox="0 0 8 8" ><path d="M1.8 4.1 3.3 5.7 6.2 2.2" stroke="#e6e6e6" stroke-width="1.15" fill="none"/></svg><div class="t " style="left:635.4px;top:185px;font-size:7.5px;color:#e2e2e2;font-weight:bold;">Mesh Renderer</div><svg style="left:818.6px;top:186.25px" width="6.2" height="6.2"><use href="#help"/></svg><svg style="left:830.2px;top:186.15px" width="6.4" height="6.4"><use href="#preset"/></svg><svg style="left:844.7px;top:185.95px" width="1.7" height="6.8"><use href="#kebab"/></svg>
<svg style="left:604px;top:201.4px" width="3.6" height="5.2" viewBox="0 0 3.6 5.2" ><path d="M0 0V5.2L3.6 2.6Z" fill="#757575"/></svg><div class="t " style="left:611.5px;top:200px;font-size:7.5px;color:#dcdcdc;font-weight:bold;">Materials</div>
<div class="f" style="left:822.2px;top:198.9px;width:28.1px;height:10px;"></div><div class="t " style="left:824.6px;top:200px;color:#d6d6d6;">1</div>
<svg style="left:603px;top:214.3px" width="5.2" height="3.6" viewBox="0 0 5.2 3.6" ><path d="M0 0H5.2L2.6 3.6Z" fill="#757575"/></svg><div class="t " style="left:611.5px;top:212px;font-size:7.5px;color:#dcdcdc;font-weight:bold;">Lighting</div>
<div class="t " style="left:619.6px;top:224px;">Cast Shadows</div><div class="dd" style="left:702.2px;top:223.1px;width:148.1px;height:9.7px;"></div><div class="t " style="left:704.6px;top:224px;color:#e4e4e4;">On</div>
<div class="t " style="left:619.6px;top:236px;">Receive Shadows</div><div class="cb" style="left:701.6px;top:236.1px;"></div><svg style="left:701.6px;top:236.3px" width="8" height="8" viewBox="0 0 8 8" ><path d="M1.8 4.1 3.3 5.7 6.2 2.2" stroke="#e6e6e6" stroke-width="1.15" fill="none"/></svg>
<div class="t " style="left:619.6px;top:248px;">Contribute Global Illumi</div><div class="cb" style="left:701.6px;top:248.1px;"></div>
<div class="t " style="left:619.6px;top:259px;color:#7c7c7c;">Receive Global Illumina</div><div class="dd dis" style="left:702.2px;top:258.9px;width:148.1px;height:9.7px;background:#454545;border-color:#3a3a3a"></div><div class="t " style="left:704.6px;top:259px;color:#7c7c7c;">Light Probes</div>
<svg style="left:603px;top:274.3px" width="5.2" height="3.6" viewBox="0 0 5.2 3.6" ><path d="M0 0H5.2L2.6 3.6Z" fill="#757575"/></svg><div class="t " style="left:611.5px;top:272px;font-size:7.5px;color:#dcdcdc;font-weight:bold;">Probes</div>
<div class="t " style="left:619.6px;top:283px;">Light Probes</div><div class="dd" style="left:702.2px;top:283px;width:148.1px;height:9.7px;"></div><div class="t " style="left:704.6px;top:283px;color:#e4e4e4;">Blend Probes</div>
<div class="t " style="left:619.6px;top:296px;">Reflection Probes</div><div class="dd" style="left:702.2px;top:295.1px;width:148.1px;height:9.7px;"></div><div class="t " style="left:704.6px;top:296px;color:#e4e4e4;">Blend Probes</div>
<div class="t " style="left:619.6px;top:307px;">Anchor Override</div><div class="f" style="left:702.2px;top:306.7px;width:148.1px;height:10px;"></div><div class="" style="left:839.3px;top:307.3px;width:10.4px;height:8.8px;background:#373737;border-radius:0 1.5px 1.5px 0"></div><div class="t " style="left:704.4px;top:307px;color:#d6d6d6;">None (Transform)</div><svg style="left:841.5px;top:308.7px" width="6" height="6"><use href="#pick"/></svg>
<div class="t " style="left:620.6px;top:320px;font-size:7px;color:#6c6c6c;">#0</div>
<div class="f" style="left:640.2px;top:319px;width:167.8px;height:10px;background:#3d3d3d;border-color:#303030"></div><div class="" style="left:797px;top:319.6px;width:10.4px;height:8.8px;background:#3d3d3d;border-radius:0 1.5px 1.5px 0"></div><svg style="left:642.8px;top:321.4px" width="5.4" height="5.4" viewBox="0 0 6 6" ><circle cx="3" cy="3" r="2.7" fill="#4a8fc0"/><path d="M.6 3A2.4 2.4 0 0 1 5.4 3Z" fill="#8fc4e8"/></svg><div class="t " style="left:650px;top:320px;color:#7c7c7c;">ReflectionProbe (Reflection Probe)</div><svg style="left:799.2px;top:321px;opacity:.45" width="6" height="6"><use href="#pick"/></svg>
<div class="t " style="left:810px;top:320px;font-size:6.5px;color:#707070;">Weight 1.00</div>
<svg style="left:603px;top:333.3px" width="5.2" height="3.6" viewBox="0 0 5.2 3.6" ><path d="M0 0H5.2L2.6 3.6Z" fill="#757575"/></svg><div class="t " style="left:611.5px;top:331px;font-size:7.5px;color:#dcdcdc;font-weight:bold;">Additional Settings</div>
<div class="t " style="left:619.6px;top:342px;">Motion Vectors</div><div class="dd" style="left:702.2px;top:341.9px;width:148.1px;height:9.7px;"></div><div class="t " style="left:704.6px;top:342px;color:#e4e4e4;">Per Object Motion</div>
<div class="t " style="left:619.6px;top:355px;">Dynamic Occlusion</div><div class="cb" style="left:701.6px;top:355.1px;"></div><svg style="left:701.6px;top:355.3px" width="8" height="8" viewBox="0 0 8 8" ><path d="M1.8 4.1 3.3 5.7 6.2 2.2" stroke="#e6e6e6" stroke-width="1.15" fill="none"/></svg>
<div class="" style="left:600px;top:369.6px;width:258px;height:1px;background:#292929;"></div><div class="" style="left:600px;top:370.6px;width:258px;height:12px;background:#3e3e3e;"></div><svg style="left:603.1px;top:375.1px" width="5" height="3.4" viewBox="0 0 5 3.4" ><path d="M0 0H5L2.5 3.4Z" fill="#686868"/></svg><svg style="left:611.6px;top:372.1px" width="9" height="9"><use href="#meshc"/></svg><div class="cb" style="left:624.2px;top:372.3px;"></div><svg style="left:624.2px;top:372.5px" width="8" height="8" viewBox="0 0 8 8" ><path d="M1.8 4.1 3.3 5.7 6.2 2.2" stroke="#e6e6e6" stroke-width="1.15" fill="none"/></svg><div class="t " style="left:635.4px;top:372px;font-size:7.5px;color:#e2e2e2;font-weight:bold;">Mesh Collider</div><svg style="left:818.6px;top:373.5px" width="6.2" height="6.2"><use href="#help"/></svg><svg style="left:830.2px;top:373.4px" width="6.4" height="6.4"><use href="#preset"/></svg><svg style="left:844.7px;top:373.2px" width="1.7" height="6.8"><use href="#kebab"/></svg>
<div class="t " style="left:611.2px;top:387px;">Convex</div><div class="cb" style="left:701.6px;top:387.3px;"></div>
<div class="t " style="left:619.6px;top:399px;color:#7c7c7c;">Is Trigger</div><div class="cb" style="left:701.6px;top:399.1px;background:#333;border-color:#2c2c2c"></div>
<div class="t " style="left:611.2px;top:411px;">Provides Contacts</div><div class="cb" style="left:701.6px;top:411.1px;"></div>
<div class="t " style="left:611.2px;top:423px;">Cooking Options</div><div class="dd" style="left:702.2px;top:422.2px;width:148.1px;height:9.7px;"></div><div class="t " style="left:704.6px;top:423px;color:#e4e4e4;">Everything</div>
<div class="t " style="left:611.2px;top:435px;">Material</div><div class="f" style="left:702.2px;top:434.1px;width:148.1px;height:10px;"></div><div class="" style="left:839.3px;top:434.7px;width:10.4px;height:8.8px;background:#373737;border-radius:0 1.5px 1.5px 0"></div><div class="t " style="left:704.4px;top:435px;color:#d6d6d6;">None (Physic Material)</div><svg style="left:841.5px;top:436.1px" width="6" height="6"><use href="#pick"/></svg>
<div class="" style="left:854.6px;top:69px;width:3px;height:362px;background:#5f5f5f;border-radius:1.5px"></div>
<svg style="left:854px;top:64px" width="4" height="3" viewBox="0 0 4 3" ><path d="M0 3H4L2 0Z" fill="#c8c8c8"/></svg><svg style="left:854px;top:442px" width="4" height="3" viewBox="0 0 4 3" ><path d="M0 0H4L2 3Z" fill="#c8c8c8"/></svg>
<!-- project -->
<div class="" style="left:0px;top:290px;width:598.8px;height:12px;background:#282828;"></div>
<div class="" style="left:0px;top:290px;width:47.5px;height:12px;background:#3c3c3c;"></div>
<svg style="left:2.6px;top:293px" width="7" height="5.6"><use href="#fold"/></svg><div class="t " style="left:12.5px;top:292px;font-size:7.8px;color:#cfcfcf;">Project</div>
<svg style="left:53px;top:292.6px" width="6.4" height="6.8" viewBox="0 0 8 8" ><rect x=".5" y=".5" width="7" height="7" rx="1" fill="#c8c8c8"/><path d="M2 2.4H6M2 4H6M2 5.6H5" stroke="#282828" stroke-width=".8"/></svg>
<div class="t " style="left:62px;top:292px;color:#c4c4c4;">Console</div>
<svg style="left:577px;top:292.4px" width="6.6" height="6.6"><use href="#lock"/></svg><svg style="left:589.6px;top:292px" width="1.8" height="7.2"><use href="#kebab"/></svg>
<div class="" style="left:0px;top:302px;width:598.8px;height:12px;background:#3c3c3c;"></div>
<svg style="left:3px;top:304.5px" width="7" height="7" viewBox="0 0 7 7" ><path d="M3.5 0V7M0 3.5H7" stroke="#dcdcdc" stroke-width="1.3"/></svg><svg style="left:12.9px;top:307px" width="4.2" height="2.6" viewBox="0 0 4.2 2.6" ><path d="M0 0H4.2L2.1 2.6Z" fill="#c8c8c8"/></svg>
<div class="f" style="left:320.2px;top:303.4px;width:178.2px;height:9.4px;border-radius:2px"></div>
<svg style="left:323px;top:306px" width="4.6" height="4.6" viewBox="0 0 10 10" ><circle cx="4" cy="4" r="2.8" fill="none" stroke="#d0d0d0" stroke-width="1.6"/><path d="M6 6 9.4 9.4" stroke="#d0d0d0" stroke-width="1.6"/></svg>
<svg style="left:500px;top:303.6px" width="98" height="9" viewBox="0 0 98 9" ><rect x="2.2" y=".8" width="5.6" height="5.6" rx=".8" fill="none" stroke="#a8a8a8" stroke-width=".8"/><circle cx="2.6" cy="6" r="1.9" fill="#3c3c3c" stroke="#a8a8a8" stroke-width=".8"/><circle cx="16.4" cy="2.6" r="1.7" fill="#c8c8c8"/><rect x="14.4" y="4.6" width="3.6" height="3.6" fill="#c8c8c8"/><path d="M19.4 3.4 22 6.6H19.4Z" fill="#c8c8c8"/><path d="M30.6 4.6 34 1.4H37V4.2L33.6 7.6Z" fill="#c8c8c8"/><circle cx="35.6" cy="2.8" r=".7" fill="#3c3c3c"/><circle cx="49.2" cy="4.4" r="3.6" fill="#d8d8d8"/><path d="M49.2 2V5" stroke="#3c3c3c" stroke-width="1.2"/><circle cx="49.2" cy="6.4" r=".7" fill="#3c3c3c"/><path d="M64.2 .8 65.3 3.3 68 3.6 66 5.4 66.6 8 64.2 6.7 61.8 8 62.4 5.4 60.4 3.6 63.1 3.3Z" fill="#8a8a8a"/><path d="M75.6 4.4C77.4 1.6 82.2 1.6 84 4.4 82.2 7.2 77.4 7.2 75.6 4.4Z" fill="#b8b8b8"/><circle cx="79.8" cy="4.4" r="1.2" fill="#3c3c3c"/><path d="M76.6 8 83 .8" stroke="#3c3c3c" stroke-width="1.8"/><path d="M77 7.8 82.8 1" stroke="#b8b8b8" stroke-width=".8"/></svg>
<div class="t " style="left:586px;top:304px;font-size:7.6px;color:#bdbdbd;">24</div>
<div class="" style="left:0px;top:314px;width:67.6px;height:134px;background:#383838;"></div>
<div class="" style="left:67.6px;top:314px;width:1.4px;height:134px;background:#232323;"></div>
<div style="left:0;top:314px;width:60px;height:134px;overflow:hidden">
<svg style="left:1.1px;top:3.3px" width="5.2" height="3.6" viewBox="0 0 5.2 3.6" ><path d="M0 0H5.2L2.6 3.6Z" fill="#757575"/></svg>
<svg style="left:9.9px;top:1.6px" width="7.6" height="6.6"><use href="#foldo"/></svg>
<div class="t " style="left:19.8px;top:0px;font-size:7.5px;color:#d0d0d0;font-weight:bold;">Assets</div>
<svg style="left:9.35px;top:12.9px" width="5.2" height="3.6" viewBox="0 0 5.2 3.6" ><path d="M0 0H5.2L2.6 3.6Z" fill="#757575"/></svg>
<svg style="left:18.15px;top:11.2px" width="7.6" height="6.6"><use href="#foldo"/></svg>
<div class="t " style="left:28.05px;top:10px;font-size:7.9px;color:#d0d0d0;">1</div>
<svg style="left:26.4px;top:20.8px" width="7.6" height="6.6"><use href="#fold"/></svg>
<div class="t " style="left:36.3px;top:20px;font-size:7.9px;color:#d0d0d0;">1</div>
<div class="" style="left:0px;top:29px;width:60px;height:9.6px;background:#4d4d4d;"></div>
<svg style="left:26.4px;top:30.4px" width="7.6" height="6.6"><use href="#fold"/></svg>
<div class="t " style="left:36.3px;top:29px;font-size:7.9px;color:#d0d0d0;">test</div>
<svg style="left:26.4px;top:40px" width="7.6" height="6.6"><use href="#folde"/></svg>
<div class="t " style="left:36.3px;top:39px;font-size:7.9px;color:#d0d0d0;">UdonSharp</div>
<svg style="left:18.15px;top:49.6px" width="7.6" height="6.6"><use href="#fold"/></svg>
<div class="t " style="left:28.05px;top:48px;font-size:7.3px;color:#d0d0d0;">AWSSDK</div>
<svg style="left:10.35px;top:60px" width="3.6" height="5.2" viewBox="0 0 3.6 5.2" ><path d="M0 0V5.2L3.6 2.6Z" fill="#757575"/></svg>
<svg style="left:18.15px;top:59.2px" width="7.6" height="6.6"><use href="#fold"/></svg>
<div class="t " style="left:28.05px;top:58px;font-size:7.9px;color:#d0d0d0;">Scenes</div>
<svg style="left:18.15px;top:68.8px" width="7.6" height="6.6"><use href="#fold"/></svg>
<div class="t " style="left:28.05px;top:68px;font-size:7.9px;color:#d0d0d0;">SerializedUdonPrograms</div>
<svg style="left:10.35px;top:79.2px" width="3.6" height="5.2" viewBox="0 0 3.6 5.2" ><path d="M0 0V5.2L3.6 2.6Z" fill="#757575"/></svg>
<svg style="left:18.15px;top:78.4px" width="7.6" height="6.6"><use href="#fold"/></svg>
<div class="t " style="left:28.05px;top:77px;font-size:7.9px;color:#d0d0d0;">TextMesh Pro</div>
<svg style="left:10.35px;top:88.8px" width="3.6" height="5.2" viewBox="0 0 3.6 5.2" ><path d="M0 0V5.2L3.6 2.6Z" fill="#757575"/></svg>
<svg style="left:18.15px;top:88px" width="7.6" height="6.6"><use href="#fold"/></svg>
<div class="t " style="left:28.05px;top:87px;font-size:7.9px;color:#d0d0d0;">UdonSharp</div>
<svg style="left:10.35px;top:98.4px" width="3.6" height="5.2" viewBox="0 0 3.6 5.2" ><path d="M0 0V5.2L3.6 2.6Z" fill="#757575"/></svg>
<svg style="left:18.15px;top:97.6px" width="7.6" height="6.6"><use href="#fold"/></svg>
<div class="t " style="left:28.05px;top:96px;font-size:7.9px;color:#d0d0d0;">VitDeck</div>
<svg style="left:9.35px;top:108.9px" width="5.2" height="3.6" viewBox="0 0 5.2 3.6" ><path d="M0 0H5.2L2.6 3.6Z" fill="#757575"/></svg>
<svg style="left:18.15px;top:107.2px" width="7.6" height="6.6"><use href="#foldo"/></svg>
<div class="t " style="left:28.05px;top:106px;font-size:7.9px;color:#d0d0d0;">VketAssets</div>
<svg style="left:17.6px;top:118.5px" width="5.2" height="3.6" viewBox="0 0 5.2 3.6" ><path d="M0 0H5.2L2.6 3.6Z" fill="#757575"/></svg>
<svg style="left:26.4px;top:116.8px" width="7.6" height="6.6"><use href="#foldo"/></svg>
<div class="t " style="left:36.3px;top:116px;font-size:7.9px;color:#d0d0d0;">EssentialResources</div>
<svg style="left:34.65px;top:126.4px" width="7.6" height="6.6"><use href="#fold"/></svg>
<div class="t " style="left:44.55px;top:125px;font-size:7.9px;color:#d0d0d0;">Attributes</div>
</div>
<div class="" style="left:60.6px;top:314px;width:7px;height:134px;background:#353535;"></div>
<div class="" style="left:62px;top:336.3px;width:4.6px;height:47.5px;background:#5e5e5e;border-radius:2.3px"></div>
<svg style="left:62px;top:318px" width="4.4" height="3" viewBox="0 0 4 3" ><path d="M0 3H4L2 0Z" fill="#d0d0d0"/></svg><svg style="left:62px;top:443px" width="4.4" height="3" viewBox="0 0 4 3" ><path d="M0 0H4L2 3Z" fill="#d0d0d0"/></svg>
<div class="" style="left:69px;top:314px;width:529.8px;height:134px;background:#333;"></div>
<div class="" style="left:69px;top:314.4px;width:529.8px;height:12px;background:#3c3c3c;"></div>
<div class="t " style="left:70.8px;top:316px;font-size:7.8px;color:#b8b8b8;word-spacing:.8px">Assets <span style="color:#9a9a9a">&gt;</span> 1 <span style="color:#9a9a9a">&gt;</span> <b style="color:#dcdcdc;font-size:7.5px">test</b></div>
<div class="" style="left:69px;top:436.4px;width:529.8px;height:11.6px;background:#3c3c3c;"></div>
<div class="" style="left:556px;top:441.6px;width:33px;height:0.8px;background:#6a6a6a;"></div>
<div class="" style="left:571.8px;top:439px;width:6px;height:6px;background:#b2b2b2;border-radius:50%"></div>
<div class="" style="left:78px;top:334px;width:36.6px;height:36.3px;background:#515151;border-radius:1.5px"></div><div class="" style="left:123.8px;top:334px;width:36.5px;height:36.3px;background:#515151;border-radius:1.5px"></div>
<svg style="left:78px;top:334px" width="83" height="37" viewBox="0 0 83 37" ><defs><radialGradient id="sph" cx=".36" cy=".3" r=".8"><stop offset="0" stop-color="#cacaca"/><stop offset=".35" stop-color="#b2b2b2"/><stop offset=".68" stop-color="#8c8c8c"/><stop offset=".9" stop-color="#5a5a5a"/><stop offset="1" stop-color="#474747"/></radialGradient></defs><circle cx="18.3" cy="18.4" r="17.2" fill="#3e3e3e"/><circle cx="18.3" cy="18.4" r="16.6" fill="url(#sph)"/><path d="M33.6 14A16 16 0 0 1 12 33.4" fill="none" stroke="#a8a8a8" stroke-opacity=".55" stroke-width="1.3"/><circle cx="64" cy="18.8" r="16.9" fill="#fff"/></svg>
<div class="t " style="left:89.5px;top:372px;font-size:6.6px;color:#c8c8c8;">test1</div><div class="t " style="left:134.5px;top:372px;font-size:6.6px;color:#c8c8c8;">test2</div>
<!-- status bar -->
<div style="left:0;top:448px;width:860px;height:10px;background:#191919;overflow:hidden">
<svg style="left:0.4px;top:2.2px" width="8.2" height="8.4" viewBox="0 0 8.2 8.4" ><circle cx="4.1" cy="4.2" r="3.9" fill="#f0f0f0"/><path d="M4.1 1.8V5" stroke="#191919" stroke-width="1.3"/><circle cx="4.1" cy="6.5" r=".75" fill="#191919"/></svg>
<div class="t " style="left:11.3px;top:2px;font-size:7.7px;color:#d4d4d4;">Setup Completed.</div>
<svg style="left:799.4px;top:2.4px" width="60" height="9" viewBox="0 0 60 9" ><ellipse cx="6" cy="5" rx="2.4" ry="3" fill="#c8c8c8"/><path d="M2.6 2 9.4 8M2.4 5H9.6M3 8 9 2" stroke="#c8c8c8" stroke-width=".7"/><path d="M2.6 8.6 9.4 1.4" stroke="#191919" stroke-width="1"/><path d="M18 2.4 21.6 .8 25.2 2.4V6.8L21.6 8.6 18 6.8Z" fill="#c8c8c8"/><path d="M18.4 4.6H24.8" stroke="#191919" stroke-width=".8"/><path d="M18.4 8.6 25 1.2" stroke="#191919" stroke-width=".9"/><circle cx="37" cy="4.8" r="3.4" fill="none" stroke="#c8c8c8" stroke-width=".9"/><path d="M35 4.8A2 2 0 0 1 39 4.8M37 4.8V8" stroke="#c8c8c8" stroke-width=".8" fill="none"/><path d="M33.6 8.6 40.4 1.2" stroke="#191919" stroke-width="1"/><circle cx="52.6" cy="5.2" r="3.7" fill="none" stroke="#c8c8c8" stroke-width=".8"/><path d="M50.8 5.2 52.2 6.6 54.6 3.8" fill="none" stroke="#c8c8c8" stroke-width=".9"/></svg>
</div>
<!-- red annotation arrow -->
<svg style="left:0;top:0" width="860" height="458" viewBox="0 0 860 458"><path d="M150.3 349.1 359 197.9" stroke="#fb0007" stroke-width="3.2" fill="none"/><path d="M381 182 353 193.2 361.8 204.8Z" fill="#fb0007"/></svg>
<div class="" style="left:0px;top:48px;width:0.8px;height:400px;background:#444;"></div>
<div class="" style="left:857.8px;top:0px;width:2.2px;height:458px;background:#fafafa;"></div>
</body>
</html>
